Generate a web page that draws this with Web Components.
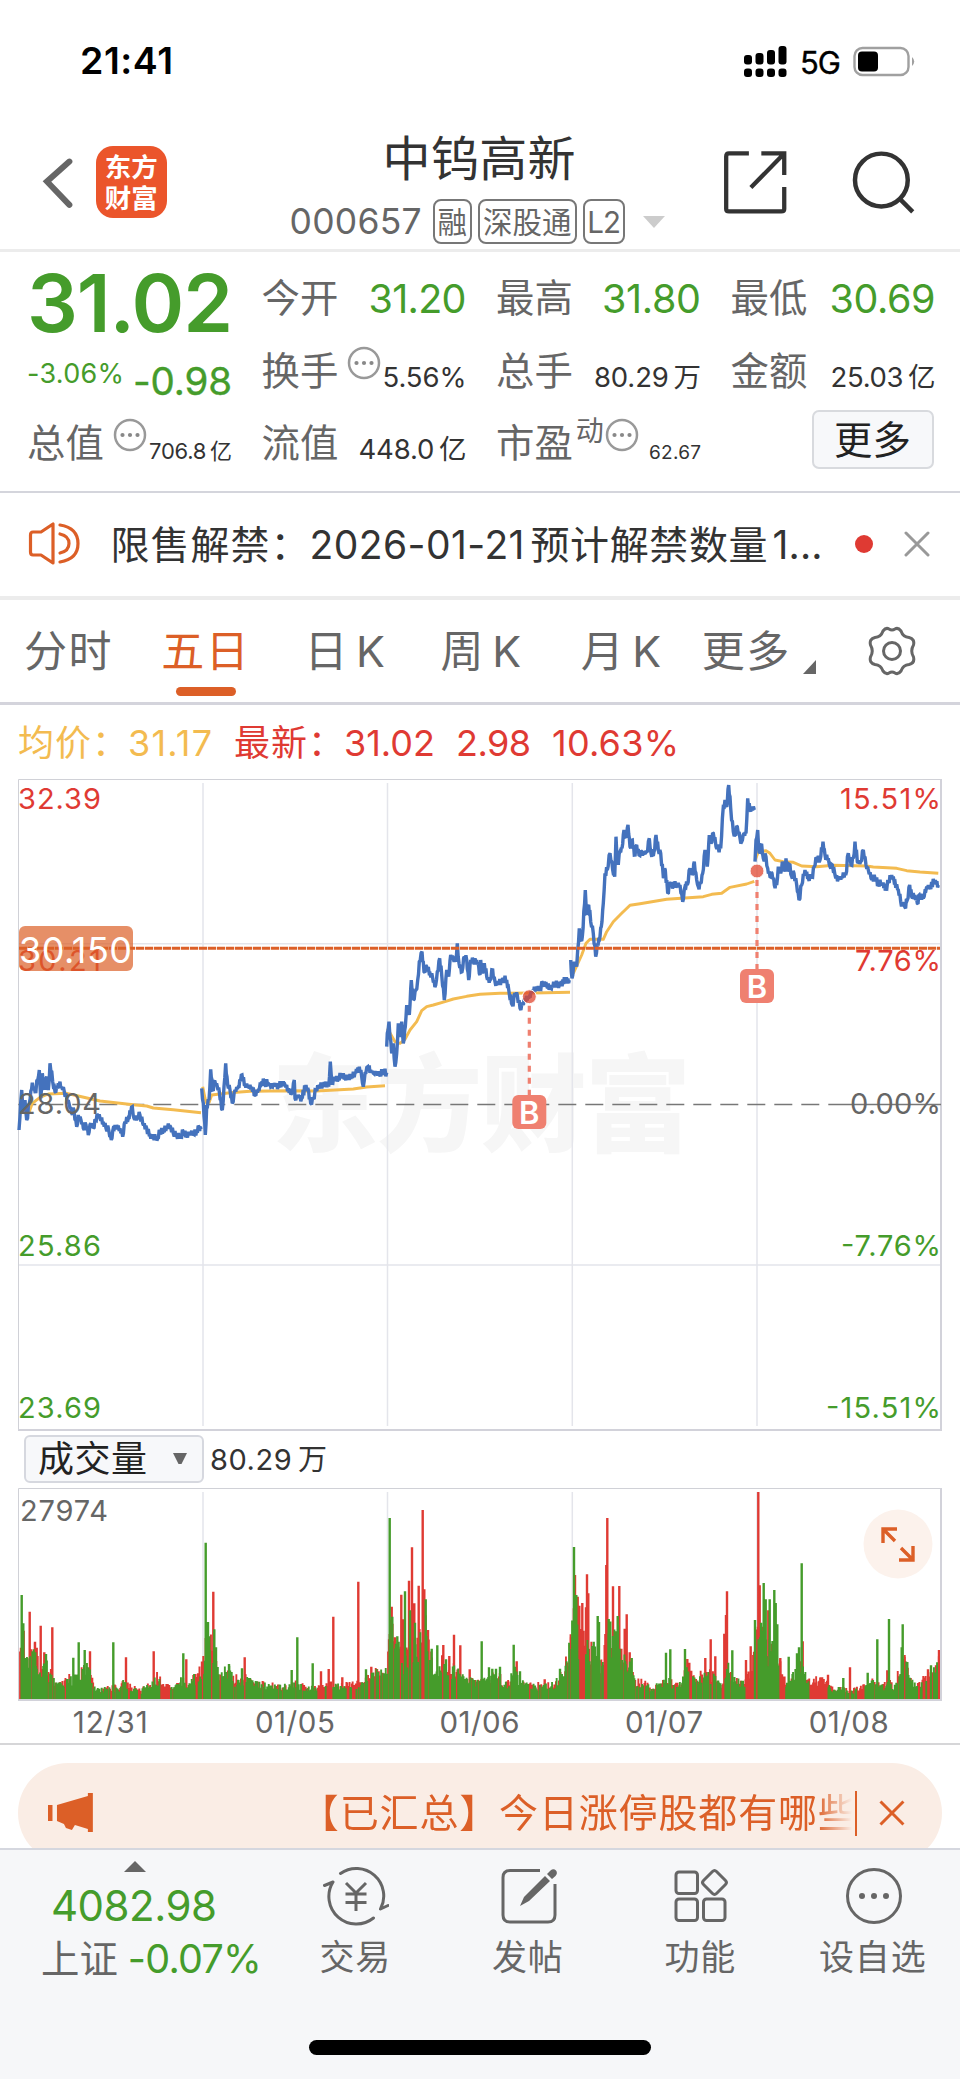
<!DOCTYPE html>
<html lang="zh-CN">
<head>
<meta charset="UTF-8">
<title>中钨高新 000657</title>
<style>
  * { margin: 0; padding: 0; box-sizing: border-box; }
  html, body { width: 960px; height: 2079px; overflow: hidden; }
  body {
    font-family: Inter, "Noto Sans CJK SC", sans-serif;
    background: #fff;
    color: #333;
    --up: #df3a33;
    --down: #459c2b;
    --brand: #dc5f27;
    --grey: #666;
    --line: #d4d5dc;
  }
</style>
</head>
<body>
<stock-page></stock-page>

<script>
// Single line of text spread to an exact width through its letter spacing
class FitText extends HTMLElement {
  constructor() {
    super();
    this.attachShadow({ mode: "open" });
  }

  connectedCallback() {
    this.shadowRoot.innerHTML = `
      <style>
        :host { display: inline-block; flex: none; line-height: 1; white-space: nowrap; }
        span { display: inline-block; }
      </style>
      <span><slot></slot></span>`;
    const width = Number(this.getAttribute("width"));
    const span = this.shadowRoot.querySelector("span");
    const gaps = Math.max(1, [...this.textContent].length - 1);
    const natural = span.getBoundingClientRect().width;
    span.style.letterSpacing = (width - natural) / gaps + "px";
    this.style.width = width + "px";
  }
}
customElements.define("fit-text", FitText);

class StatusBar extends HTMLElement {
  constructor() {
    super();
    this.attachShadow({ mode: "open" });
    this.shadowRoot.innerHTML = `
      <style>
        :host { display: flex; justify-content: space-between; height: 122px; padding: 0 44px 0 80px; color: #000; }
        .time { font-size: 37.5px; font-weight: 600; line-height: 122px; }
        .right { display: flex; align-items: center; height: 122px; }
        .net { font-size: 31px; font-weight: 400; margin: 3px 12px 0 12px; -webkit-text-stroke: .4px #000; }
      </style>
      <fit-text class="time" width="93">21:41</fit-text>
      <div class="right">
        <svg width="44" height="32" viewBox="0 0 44 32">
          <g fill="#000">
            <rect x="0" y="10" width="8" height="9.500" rx="3"/><rect x="11.500" y="8" width="8" height="11.500" rx="3"/>
            <rect x="23" y="5" width="8" height="14.500" rx="3"/><rect x="34.500" y="1" width="8" height="18.500" rx="3"/>
            <rect x="0" y="23.500" width="8" height="8.500" rx="3"/><rect x="11.500" y="23.500" width="8" height="8.500" rx="3"/>
            <rect x="23" y="23.500" width="8" height="8.500" rx="3"/><rect x="34.500" y="23.500" width="8" height="8.500" rx="3"/>
          </g>
        </svg>
        <fit-text class="net" width="41">5G</fit-text>
        <svg width="63" height="31" viewBox="0 0 63 31">
          <rect x="1.500" y="2" width="54" height="27" rx="8" fill="none" stroke="#a0a0a0" stroke-width="2.400"/>
          <rect x="5" y="5.500" width="20" height="20" rx="4" fill="#000"/>
          <path d="M59 11q4.500 4.500 0 9z" fill="#a0a0a0"/>
        </svg>
      </div>`;
  }
}
customElements.define("status-bar", StatusBar);

class StockHeader extends HTMLElement {
  constructor() {
    super();
    this.attachShadow({ mode: "open" });
    this.shadowRoot.innerHTML = `
      <style>
        * { box-sizing: border-box; }
        :host { display: flex; height: 130px; padding: 0 43px 0 42px; border-bottom: 3px solid #ececec; }
        .back { margin: 35px 22px 0 0; }
        .logo {
          width: 71px; height: 72px; margin: 24px 1px 0 0; border-radius: 17px; background: #eb552b; color: #fff;
          font-size: 26.500px; font-weight: 700; line-height: 31px; text-align: center; padding: 6px 0;
        }
        .mid { width: 376px; margin: 13px 0 0 122px; display: flex; flex-direction: column; }
        .name { font-size: 48px; margin-left: 93px; }
        .sub { display: flex; align-items: center; margin-top: 16px; color: #666; }
        .code { font-size: 35.500px; margin-right: 11px; }
        .tag { height: 45px; border: 2px solid #777; border-radius: 8px; font-size: 29.500px; line-height: 42px; padding: 0 3px; margin-right: 6px; white-space: nowrap; }
        .l2 { width: 42px; letter-spacing: -1px; text-align: center; padding: 0; }
        .share { margin: 28px 0 0 57px; }
        .search { margin: 27px 0 0 63px; }
      </style>
      <svg class="back" width="32" height="53" viewBox="0 0 32 53"><path d="M27.500 4.500L5 24.500L27.500 48" fill="none" stroke="#666" stroke-width="6" stroke-linecap="round"/></svg>
      <div class="logo">东方<br>财富</div>
      <div class="mid">
        <fit-text class="name" width="193">中钨高新</fit-text>
        <div class="sub">
          <fit-text class="code" width="132">000657</fit-text>
          <span class="tag">融</span><span class="tag">深股通</span><span class="tag l2">L2</span>
          <svg width="24" height="12" viewBox="0 0 24 12" style="margin-left:11px"><path d="M1 0H23L12 12z" fill="#ccc"/></svg>
        </div>
      </div>
      <svg class="share" width="66" height="66" viewBox="0 0 66 66" fill="none" stroke="#333" stroke-width="4.300">
        <path d="M26 3.300H6Q3.200 3.300 3.200 6.300V59Q3.200 61.500 6 61.500H58.500Q61.500 61.500 61.500 59V37M38.500 3.300H61.500V25M60.500 4.500L28 37.500"/>
      </svg>
      <svg class="search" width="66" height="66" viewBox="0 0 66 66" fill="none" stroke="#333" stroke-width="4.500">
        <circle cx="30.500" cy="31" r="26.500"/><path d="M49 50L62 63"/>
      </svg>`;
  }
}
customElements.define("stock-header", StockHeader);

// Round "..." badge next to a label
class InfoDot extends HTMLElement {
  constructor() {
    super();
    this.attachShadow({ mode: "open" });
    this.shadowRoot.innerHTML = `
      <style>:host { display: inline-block; width: 34px; padding-bottom: 5px; flex: none; } svg { display: block; }</style>
      <svg width="34" height="34" viewBox="0 0 34 34">
        <circle cx="17" cy="17" r="15" fill="none" stroke="#999" stroke-width="2.500"/>
        <g fill="#888"><circle cx="9.500" cy="17" r="2.100"/><circle cx="17" cy="17" r="2.100"/><circle cx="24.500" cy="17" r="2.100"/></g>
      </svg>`;
  }
}
customElements.define("info-dot", InfoDot);

// Label on the left (default slot), value on the right
class StatCell extends HTMLElement {
  constructor() {
    super();
    this.attachShadow({ mode: "open" });
    this.shadowRoot.innerHTML = `
      <style>
        :host { display: flex; align-items: baseline; justify-content: space-between; height: 73px; min-width: 0; }
        .label { font-size: 38.400px; line-height: 72px; color: var(--grey); white-space: nowrap; display: flex; align-items: baseline; }
        ::slotted([slot="value"]) { position: relative; top: 2px; }
        ::slotted(.g) { top: 1px; }
      </style>
      <div class="label"><slot></slot></div>
      <slot name="value"></slot>`;
  }
}
customElements.define("stat-cell", StatCell);

class QuotePanel extends HTMLElement {
  constructor() {
    super();
    this.attachShadow({ mode: "open" });
    this.shadowRoot.innerHTML = `
      <style>
        * { box-sizing: border-box; }
        :host { display: grid; grid-template-columns: repeat(4, 205px); column-gap: 29.500px; grid-auto-rows: 72.500px;
          height: 241px; padding: 10px 25px 0 27px; border-bottom: 2px solid var(--line); }
        .price { font-size: 80px; font-weight: 600; line-height: 72px; padding-top: 5px; color: var(--down); }
        .change { display: flex; justify-content: space-between; color: var(--down); }
        .pct { font-size: 27px; line-height: 72px; margin-top: 3px; }
        .diff { font-size: 38.500px; line-height: 72px; margin-top: 10px; -webkit-text-stroke: .4px var(--down); }
        .g { font-size: 39.500px; color: var(--down); }
        .v { font-size: 27.500px; color: #333; }
        .s { font-size: 22px; color: #333; }
        .xs { font-size: 19px; color: #333; }
        sup { font-size: 28px; line-height: 1; align-self: flex-start; margin: 10px 0 0 3px; }
        info-dot { margin-left: 9px; }
        .more { justify-self: end; align-self: start; width: 122px; height: 59px; margin: 3px 2px 0 0; border: 2px solid #d8dade;
          border-radius: 7px; background: #f7f8fa; font-size: 38.400px; line-height: 56px; text-align: center; color: #222; }
      </style>
      <fit-text class="price" width="206">31.02</fit-text>
      <stat-cell>今开<fit-text slot="value" class="g" width="98">31.20</fit-text></stat-cell>
      <stat-cell>最高<fit-text slot="value" class="g" width="99">31.80</fit-text></stat-cell>
      <stat-cell>最低<fit-text slot="value" class="g" width="106">30.69</fit-text></stat-cell>
      <div class="change"><fit-text class="pct" width="97">-3.06%</fit-text><fit-text class="diff" width="99">-0.98</fit-text></div>
      <stat-cell>换手<info-dot></info-dot><fit-text slot="value" class="v" width="84">5.56%</fit-text></stat-cell>
      <stat-cell>总手<fit-text slot="value" class="v" width="107">80.29&#8201;万</fit-text></stat-cell>
      <stat-cell>金额<fit-text slot="value" class="v" width="105">25.03&#8201;亿</fit-text></stat-cell>
      <stat-cell>总值<info-dot></info-dot><fit-text slot="value" class="s" width="83">706.8&#8201;亿</fit-text></stat-cell>
      <stat-cell>流值<fit-text slot="value" class="v" width="108">448.0&#8201;亿</fit-text></stat-cell>
      <stat-cell>市盈<sup>动</sup><info-dot style="margin-left:1px"></info-dot><fit-text slot="value" class="xs" width="52">62.67</fit-text></stat-cell>
      <div class="more">更多</div>`;
  }
}
customElements.define("quote-panel", QuotePanel);

class NewsStrip extends HTMLElement {
  constructor() {
    super();
    this.attachShadow({ mode: "open" });
    this.shadowRoot.innerHTML = `
      <style>
        :host { display: flex; align-items: center; height: 107px; padding: 0 30px 1px 28px; border-bottom: 4px solid #ececec; }
        .text { font-size: 39px; margin: 0 0 0 29.500px; display: flex; }
        .dot { width: 18px; height: 18px; border-radius: 50%; background: var(--up); margin: 0 31px 0 auto; }
      </style>
      <svg width="53" height="46" viewBox="0 0 53 46" fill="none" stroke="#dc5f27" stroke-width="3.200" stroke-linecap="round" stroke-linejoin="round">
        <path d="M25 3V42L13 34H5Q2.500 34 2.500 31V14Q2.500 11 5 11H13zM32 4Q50 7 50 22.500Q50 38 32 41M32 13Q41 15 41 22.500Q41 30 32 32"/>
      </svg>
      <div class="text"><fit-text width="199">限售解禁：</fit-text><fit-text width="215">2026-01-21</fit-text><fit-text width="237" style="margin-left:6px">预计解禁数量</fit-text><fit-text width="50" style="margin-left:5px">1...</fit-text></div>
      <span class="dot"></span>
      <svg width="26" height="26" viewBox="0 0 26 26" stroke="#999" stroke-width="3" stroke-linecap="round"><path d="M2 2L24 24M24 2L2 24"/></svg>`;
  }
}
customElements.define("news-strip", NewsStrip);

class PeriodTab extends HTMLElement {
  constructor() {
    super();
    this.attachShadow({ mode: "open" });
    this.shadowRoot.innerHTML = `
      <style>
        :host { display: flex; flex-direction: column; align-items: center; color: var(--grey); font-size: 43px; white-space: nowrap; }
        :host([active]) { color: var(--brand); }
        span { display: flex; gap: 7px; letter-spacing: 1.600px; height: 86px; line-height: 100px; }
        i { display: none; width: 60px; height: 9px; border-radius: 4.500px; background: var(--brand); }
        :host([active]) i { display: block; }
      </style>
      <span><slot></slot></span><i></i>`;
  }
}
customElements.define("period-tab", PeriodTab);

class PeriodTabs extends HTMLElement {
  constructor() {
    super();
    this.attachShadow({ mode: "open" });
    this.shadowRoot.innerHTML = `
      <style>
        :host { display: flex; height: 105px; padding: 1px 42px 0 24px; border-bottom: 3px solid #d4d4dc; }
        .corner { margin: 59px 0 0 12px; }
        .gear { margin: 24px 0 0 auto; }
      </style>
      <period-tab>分时</period-tab>
      <period-tab active style="margin-left:48px">五日</period-tab>
      <period-tab style="margin-left:54px">日<b style="font-weight:400">K</b></period-tab>
      <period-tab style="margin-left:54px">周<b style="font-weight:400">K</b></period-tab>
      <period-tab style="margin-left:58px">月<b style="font-weight:400">K</b></period-tab>
      <period-tab style="margin-left:39px">更多</period-tab>
      <svg class="corner" width="13" height="14" viewBox="0 0 13 14"><path d="M13 0V14H0z" fill="#666"/></svg>
      <svg class="gear" width="52" height="52" viewBox="0 0 52 52" fill="none" stroke="#666" stroke-width="3" stroke-linejoin="round">
        <path d="M17 6Q20 2 23 4Q26 6 29 4Q32 2 35 6Q37 12 43 12.500Q49 14 47.500 20Q44 26 47.500 32Q49 38 43 39.500Q37 40 35 46Q32 50 29 48Q26 46 23 48Q20 50 17 46Q15 40 9 39.500Q3 38 4.500 32Q8 26 4.500 20Q3 14 9 12.500Q15 12 17 6z"/>
        <circle cx="26" cy="26" r="8.500"/>
      </svg>`;
  }
}
customElements.define("period-tabs", PeriodTabs);

class ChartLegend extends HTMLElement {
  constructor() {
    super();
    this.attachShadow({ mode: "open" });
    this.shadowRoot.innerHTML = `
      <style>
        :host { display: flex; height: 74px; padding: 20px 0 0 18px; font-size: 36px; color: var(--up); }
        .avg { color: #f3bb50; }
      </style>
      <fit-text class="avg" width="110">均价：</fit-text><fit-text class="avg" width="84">31.17</fit-text>
      <fit-text width="110" style="margin-left:22px">最新：</fit-text><fit-text width="91">31.02</fit-text>
      <fit-text width="75" style="margin-left:21px">2.98</fit-text><fit-text width="127" style="margin-left:21px">10.63%</fit-text>`;
  }
}
customElements.define("chart-legend", ChartLegend);

// Small seeded generator: the charts look the same on every load
function seeded(seed) {
  return () => (seed = (seed * 16807) % 2147483647) / 2147483647;
}

// Traces are in thirds of a pixel, x from the page's left edge, y from 770
const PRICE = [
  "57,1080 65,960 70,1020 75,990 80,1050 88,1000 97,938 105,965 113,930 118,900 122,985 127,910 133,955 140,920 145,960 150,880 158,935 165,965 175,940 185,950 193,965 200,985 207,1000 215,1030 222,1020 230,1070 235,1035 243,1050 250,1075 258,1065 265,1095 272,1060 280,1075 287,1050 293,1035 300,1045 310,1055 318,1075 326,1080 334,1110 340,1075 350,1065 360,1075 368,1100 375,1055 385,1045 397,1010 402,1045 412,1040 420,1035 428,1060 440,1075 450,1095 460,1100 473,1105 480,1085 490,1080 500,1068 512,1072 520,1090 530,1095 542,1102 550,1085 560,1095 570,1088 580,1092 590,1082 597,1070 603,1078",
  "605,955 610,1000 616,1095 620,1010 627,990 632,898 638,960 645,935 652,950 658,965 667,1020 672,950 677,880 683,945 690,960 697,1000 705,960 715,950 726,915 735,945 745,945 755,950 765,975 775,960 785,935 795,940 805,938 815,950 825,940 835,948 845,940 855,945 865,955 875,970 883,930 885,985 895,975 905,985 918,945 926,965 932,1000 940,985 948,960 958,945 968,945 978,935 986,950 991,875 996,940 1005,920 1015,925 1025,910 1035,925 1045,918 1055,918 1065,908 1078,890 1085,920 1090,950 1095,910 1103,890 1112,900 1120,910 1130,905 1140,912 1150,905 1160,908",
  "1160,830 1162,790 1167,755 1175,850 1180,820 1185,890 1190,850 1195,760 1200,800 1205,755 1210,820 1216,770 1220,705 1228,735 1234,630 1240,690 1248,660 1253,630 1258,575 1266,545 1272,605 1280,590 1290,610 1298,625 1307,645 1312,605 1319,565 1325,615 1333,690 1340,600 1346,620 1352,555 1360,565 1367,575 1372,520 1377,580 1386,605 1393,560 1400,570 1406,630 1412,570 1420,575 1430,570 1436,590 1440,615 1442,570 1448,610 1453,580 1460,620 1470,630 1478,600 1485,635 1495,640 1510,628 1520,630 1527,665 1537,705 1545,670 1552,675 1560,715 1568,700 1575,690 1588,680 1598,660 1610,655 1620,655 1628,638 1640,648 1652,655 1665,640 1680,645 1695,632 1708,630",
  "1712,570 1716,625 1723,575 1730,590 1733,540 1738,475 1743,510 1747,500 1756,360 1760,430 1766,405 1772,455 1780,490 1787,560 1792,520 1798,510 1804,470 1810,400 1815,310 1822,300 1830,250 1838,300 1844,320 1848,200 1853,280 1860,245 1866,235 1872,180 1878,200 1884,165 1890,230 1897,210 1903,255 1910,225 1917,255 1925,245 1933,250 1940,245 1948,205 1953,250 1962,245 1968,195 1975,240 1982,250 1990,320 1996,300 2003,370 2010,340 2020,345 2030,345 2040,345 2048,395 2055,350 2062,345 2070,295 2077,315 2083,275 2090,330 2095,350 2102,340 2108,310 2115,240 2122,290 2128,195 2133,220 2140,190 2148,230 2155,235 2162,235 2170,110 2175,90 2180,110 2186,45 2192,115 2200,185 2205,195 2212,170 2220,205 2225,215 2232,190 2238,190 2243,85 2250,120 2255,110 2263,120",
  "2265,275 2268,210 2273,180 2278,250 2285,225 2290,265 2298,260 2303,295 2310,320 2316,310 2323,345 2330,345 2335,290 2342,310 2347,275 2355,305 2358,265 2363,300 2370,285 2375,320 2382,310 2390,345 2397,390 2405,345 2415,300 2425,325 2435,320 2443,290 2450,265 2460,270 2469,215 2475,255 2485,265 2490,290 2497,285 2505,315 2515,325 2525,320 2537,315 2545,250 2553,285 2560,265 2565,215 2572,275 2582,275 2590,240 2598,285 2605,300 2613,325 2625,325 2635,340 2645,340 2658,355 2665,335 2675,315 2685,335 2695,360 2702,395 2714,410 2722,390 2729,345 2735,380 2745,375 2752,400 2758,375 2770,385 2780,350 2790,350 2802,335 2815,345"
];
const AVERAGE = [
  "88,1025 97,1000 120,982 145,972 200,970 235,978 300,993 400,1004 440,1008 460,1014 520,1019 603,1028",
  "608,950 615,985 620,1000 627,998 635,975 690,968 750,964 860,962 950,963 1060,957 1100,951 1155,947",
  "1162,775 1185,815 1200,820 1215,808 1230,780 1250,755 1265,722 1280,710 1300,705 1335,695 1360,687 1400,679 1440,673 1500,670 1600,669 1710,667",
  "1720,610 1745,555 1758,520 1770,508 1790,508 1810,508 1820,485 1840,455 1865,430 1890,406 1920,401 2000,388 2110,380 2135,373 2165,370 2190,352 2240,342 2263,334",
  "2266,270 2275,245 2298,242 2310,250 2325,270 2350,275 2380,277 2405,288 2450,290 2500,286 2600,288 2620,291 2690,295 2720,302 2760,306 2815,310"
];

const parse = (trace) => trace.split(" ").map((p) => p.split(",").map(Number));
// page thirds -> chart pixels (chart starts at x 0, y 779)
const toPath = (points) => "M" + points.map(([x, y]) => (x / 3).toFixed(1) + " " + (y / 3 - 9).toFixed(1)).join("L");

// Adds the minute by minute wobble between two traced points
function wobble(points, random) {
  const out = [points[0]];
  for (let i = 1; i < points.length; i++) {
    const [x0, y0] = points[i - 1];
    const [x1, y1] = points[i];
    const steps = Math.max(1, Math.round((x1 - x0) / 2.3));
    for (let s = 1; s < steps; s++) {
      const t = s / steps;
      out.push([x0 + (x1 - x0) * t, y0 + (y1 - y0) * t + (s % 2 ? 1 : -1) * (3 + random() * 9)]);
    }
    out.push([x1, y1]);
  }
  return out;
}

class PriceChart extends HTMLElement {
  constructor() {
    super();
    this.attachShadow({ mode: "open" });
  }

  connectedCallback() {
    const random = seeded(657);
    const left = [["32.39", 30, "up"], ["30.21", 192, "up"], ["28.04", 334.5, "mid"], ["25.86", 477, "down"], ["23.69", 639, "down"]];
    const right = [["15.51%", 30, "up", 101], ["7.76%", 192, "up", 86], ["0.00%", 334.5, "mid", 91], ["-7.76%", 477, "down", 100], ["-15.51%", 639, "down", 115]];
    const marker = (x, dotY, boxY) => `
      <path d="M${x} ${dotY + 9}V${boxY}" stroke="#ef8070" stroke-width="3.200" stroke-dasharray="6 6"/>
      <circle cx="${x}" cy="${dotY}" r="7" fill="#e0452f" fill-opacity=".75" stroke="#fff" stroke-width="1"/>
      <rect x="${x - 17}" y="${boxY}" width="34" height="34" rx="6" fill="#ef8070"/>
      <text x="${x}" y="${boxY + 29}" text-anchor="middle" font-size="31" font-weight="600" fill="#fff">B</text>`;
    this.shadowRoot.innerHTML = `
      <style>
        :host { display: block; height: 653px; }
        svg { display: block; }
        .axis { font-size: 29px; }
        .up { fill: var(--up); } .mid { fill: #666; } .down { fill: var(--down); }
        .mark { font-size: 106px; font-weight: 900; fill: #f6f6f6; }
      </style>
      <svg width="960" height="653" viewBox="0 0 960 653">
        <text class="mark" x="272" y="364" textLength="419">东方财富</text>
        <g stroke="#e4e5eb" stroke-width="1.500">
          <path d="M203 4V647M387.500 4V647M572.300 4V647M757 4V647M19 164.700H941M19 486H941"/>
        </g>
        <path d="M18.500 651V.5H941" fill="none" stroke="#d0d1d7"/>
        <path d="M18 651H941V0" fill="none" stroke="#d2d2da" stroke-width="2"/>
        <path d="M18.300 325.500H846" stroke="#777" stroke-width="1.500" stroke-dasharray="18 9"/>
        <path d="M846 325.500H941" stroke="#777" stroke-width="1.500"/>
        ${AVERAGE.map((t) => `<path d="${toPath(parse(t))}" fill="none" stroke="#f3bb50" stroke-width="2.900" stroke-linejoin="round"/>`).join("")}
        ${PRICE.map((t) => `<path d="${toPath(wobble(parse(t), random))}" fill="none" stroke="#4472bd" stroke-width="3.400" stroke-linejoin="miter" stroke-miterlimit="2"/>`).join("")}
        ${left.map(([s, y, c]) => `<text class="axis ${c}" x="18" y="${y}" textLength="83">${s}</text>`).join("")}
        ${right.map(([s, y, c, w]) => `<text class="axis ${c}" x="${941 - w}" y="${y}" textLength="${w}">${s}</text>`).join("")}
        <path d="M19 169.300H940" stroke="#dc5f27" stroke-width="3" stroke-dasharray="8.200 .8"/>
        <rect x="19" y="147" width="114" height="45" rx="6" fill="#dc5f27" fill-opacity=".7"/>
        <text x="19" y="183.500" font-size="36" textLength="113" fill="#fff">30.150</text>
        ${marker(529.3, 217.7, 316)}
        ${marker(757, 92, 190)}
      </svg>`;
  }
}
customElements.define("price-chart", PriceChart);

class VolumeBar extends HTMLElement {
  constructor() {
    super();
    this.attachShadow({ mode: "open" });
    this.shadowRoot.innerHTML = `
      <style>
        * { box-sizing: border-box; }
        :host { display: flex; height: 56px; padding: 3px 0 0 24px; }
        .select { display: flex; align-items: center; justify-content: space-between; width: 180px; height: 48px; padding: 0 15px 0 12px;
          border: 2px solid #d6d8df; border-radius: 6px; background: #f7f8fa; font-size: 36px; color: #222; }
        .value { font-size: 29px; line-height: 49px; margin-left: 6px; }
      </style>
      <div class="select"><fit-text width="109">成交量</fit-text><svg width="14" height="12" viewBox="0 0 14 12"><path d="M0 0H14L8.500 11H5.500z" fill="#666"/></svg></div>
      <fit-text class="value" width="117">80.29&#8201;万</fit-text>`;
  }
}
customElements.define("volume-bar", VolumeBar);

// "x:height" base level, in the same thirds of a pixel
const VOLUME_BASE = "57:60 62:180 70:110 85:115 100:140 115:105 135:110 150:75 160:55 175:55 190:45 200:70 215:55 235:75 250:90 270:90 282:35 300:28 330:32 360:38 375:55 400:33 425:25 460:60 475:65 490:38 520:30 545:60 560:40 580:60 600:85 612:120 620:180 640:140 655:75 670:85 688:90 700:55 735:70 760:45 800:45 850:38 880:48 920:33 960:36 1000:42 1060:42 1080:55 1100:65 1130:75 1150:80 1163:110 1166:200 1185:165 1200:150 1215:110 1230:160 1250:180 1265:190 1280:200 1290:120 1310:80 1325:110 1345:75 1360:100 1385:70 1410:58 1440:50 1500:70 1510:40 1530:55 1540:95 1555:65 1570:45 1590:38 1660:43 1690:75 1712:165 1720:250 1740:180 1760:150 1790:130 1805:90 1815:170 1835:200 1855:190 1865:105 1885:125 1905:48 1930:48 1960:33 1985:50 2000:58 2030:38 2050:60 2065:90 2080:55 2100:65 2120:75 2140:65 2170:38 2185:105 2205:55 2225:50 2250:80 2265:140 2270:180 2285:200 2300:165 2320:150 2335:115 2350:65 2365:45 2380:70 2395:110 2408:90 2425:48 2450:55 2480:55 2500:28 2530:32 2550:25 2580:33 2605:45 2625:55 2650:40 2665:70 2680:25 2695:75 2715:110 2730:55 2750:40 2775:58 2795:80 2818:105";
// "x:top" single tall bars, g = falling, r = rising minute
const VOLUME_PEAKS = "65:525g 70:610g 71:632r 89:575r 105:665r 110:683r 122:617r 133:697r 138:702g 157:622r 220:713g 236:667g 254:690g 270:694r 340:667g 378:712r 461:694r 550:700g 559:718r 617:368g 624:606g 629:690g 640:515r 643:628g 648:682g 687:732g 726:745g 734:712r 875:750g 892:652g 938:730g 963:754r 986:747r 1000:590r 1027:772r 1075:485r 1098:748g 1114:740r 1169:294g 1175:560r 1177:590g 1185:652r 1192:649g 1204:524r 1210:598r 1215:514g 1227:482r 1230:571g 1236:382r 1243:550r 1245:608g 1256:497r 1268:270r 1273:508r 1277:538g 1284:630r 1295:686g 1312:676g 1330:675r 1338:718g 1348:708r 1362:644r 1381:676r 1409:748r 1445:664g 1467:742g 1477:746g 1488:746g 1500:740g 1541:674g 1550:724r 1560:754g 1634:778r 1680:746g 1697:737g 1712:652r 1722:381g 1725:465r 1729:525g 1733:530r 1738:557r 1747:549r 1758:562r 1761:463r 1765:520r 1781:665g 1793:588g 1797:606g 1819:435r 1822:294r 1826:597g 1839:499r 1848:634g 1853:588g 1858:498r 1864:686r 1874:626r 1880:583r 1889:697r 1895:714g 1998:698g 2011:688g 2055:687g 2062:717r 2068:728r 2116:714r 2132:658r 2146:709r 2173:641r 2178:585r 2181:514r 2197:691g 2238:720r 2252:679r 2265:600g 2275:216r 2279:496r 2283:608g 2291:489g 2297:538g 2305:571r 2309:538g 2315:671r 2323:510g 2327:549g 2332:613g 2341:714r 2366:710g 2391:700g 2397:682g 2405:430g 2408:664r 2484:764r 2530:774g 2550:742r 2603:758g 2632:658g 2662:751r 2667:597g 2705:682g 2708:613g 2714:710r 2722:726g 2784:748r 2793:736g 2808:736r 2817:690r";
// stretches where rising minutes prevail
const RISING = [[480, 512], [585, 612], [950, 1000], [1040, 1065], [1200, 1212], [1222, 1240], [1248, 1272], [1340, 1358], [1700, 1717], [1735, 1765], [1808, 1824], [2066, 2082], [2102, 2116], [2165, 2180], [2238, 2262], [2340, 2356], [2415, 2485], [2560, 2596], [2780, 2800]];

class VolumeChart extends HTMLElement {
  constructor() {
    super();
    this.attachShadow({ mode: "open" });
  }

  bars() {
    const random = seeded(27974);
    const base = VOLUME_BASE.split(" ").map((p) => p.split(":").map(Number));
    const red = [];
    const green = [];
    const add = (list, x, h, w) => list.push(`M${(x / 3 - w / 2).toFixed(1)} 211v-${(h / 3).toFixed(1)}h${w}v${(h / 3).toFixed(1)}z`);
    let i = 0;
    for (let x = 60; x < 2819; x += 2.31) {
      while (i < base.length - 2 && base[i + 1][0] < x) i++;
      const [x0, h0] = base[i];
      const [x1, h1] = base[i + 1];
      const level = h0 + (h1 - h0) * (x - x0) / (x1 - x0);
      const rising = RISING.some(([a, b]) => x >= a && x <= b);
      const isRed = random() < (rising ? 0.85 : 0.4);
      add(isRed ? red : green, x, level * (isRed ? 0.7 + random() * 0.6 : 0.6 + random() * 0.6), 1.9);
    }
    VOLUME_PEAKS.split(" ").forEach((p) => {
      const [x, top] = p.split(":");
      add(top.endsWith("r") ? red : green, Number(x), 837 - parseInt(top), 2.4);
    });
    return `<path d="${red.join("")}" fill="#df3a33"/><path d="${green.join("")}" fill="#459c2b"/>`;
  }

  connectedCallback() {
    this.shadowRoot.innerHTML = `
      <style>
        :host { display: block; height: 257px; border-bottom: 2px solid #d6d6d8; }
        .plot { position: relative; height: 214px; }
        svg { display: block; }
        .expand { position: absolute; left: 863px; top: 21px; }
        .dates { display: flex; margin: 2px 19px 0 18px; font-size: 29.500px; color: #666; }
        .dates span { flex: 1; text-align: center; line-height: 36px; }
        .dates fit-text { line-height: 36px; }
      </style>
      <div class="plot">
        <svg width="960" height="214" viewBox="0 0 960 214">
          <path d="M203 4V211M387.500 4V211M572.300 4V211M757 4V211" stroke="#e4e5eb" stroke-width="1.500"/>
          <path d="M18.500 212V.5H941" fill="none" stroke="#d0d1d7"/>
          ${this.bars()}
          <path d="M18 212H941V0" fill="none" stroke="#d2d2da" stroke-width="2"/>
          <text x="20" y="33" font-size="29" textLength="88" fill="#666">27974</text>
        </svg>
        <svg class="expand" width="70" height="70" viewBox="0 0 70 70">
          <circle cx="35" cy="35" r="34.500" fill="#fcf2ec"/>
          <path d="M34 20H20V34M20.500 20.500L32 32M50 37V51H36M49.500 50.500L38 39" fill="none" stroke="#dc5f27" stroke-width="3.400"/>
        </svg>
      </div>
      <div class="dates">
        <span><fit-text width="75">12/31</fit-text></span><span><fit-text width="80">01/05</fit-text></span><span><fit-text width="80">01/06</fit-text></span><span><fit-text width="78">01/07</fit-text></span><span><fit-text width="80">01/08</fit-text></span>
      </div>`;
  }
}
customElements.define("volume-chart", VolumeChart);

class PromoBanner extends HTMLElement {
  constructor() {
    super();
    this.attachShadow({ mode: "open" });
    this.shadowRoot.innerHTML = `
      <style>
        * { box-sizing: border-box; }
        :host { display: block; height: 103px; padding: 18px 18px 0; overflow: hidden; color: var(--brand); }
        .pill { display: flex; align-items: center; height: 100px; border-radius: 50px; background: #faede5; padding: 0 37px 0 30px; }
        .text { margin-left: 206px; width: 554px; overflow: hidden; font-size: 39px; line-height: 60px;
          -webkit-mask-image: linear-gradient(90deg, #000 calc(100% - 36px), transparent); mask-image: linear-gradient(90deg, #000 calc(100% - 36px), transparent); }
        .text fit-text { line-height: 60px; display: block; }
        .bar { width: 2px; height: 45px; background: var(--brand); margin: 0 22px 0 3px; }
      </style>
      <div class="pill">
        <svg width="46" height="40" viewBox="0 0 46 40" fill="#dc5f27">
          <path d="M0 12H4.500V28H0zM9 12L40 3V0H45V39H40V36L27 32L24 37L18 35L16 31L9 28z"/>
        </svg>
        <div class="text"><fit-text width="557">【已汇总】今日涨停股都有哪些</fit-text></div>
        <span class="bar"></span>
        <svg width="26" height="26" viewBox="0 0 26 26" stroke="#dc5f27" stroke-width="3"><path d="M1.500 1.500L24.500 24.500M24.500 1.500L1.500 24.500"/></svg>
      </div>`;
  }
}
customElements.define("promo-banner", PromoBanner);

// Icon over label; the icon comes in through its slot
class ActionItem extends HTMLElement {
  constructor() {
    super();
    this.attachShadow({ mode: "open" });
    this.shadowRoot.innerHTML = `
      <style>
        :host { display: flex; flex-direction: column; align-items: center; width: 172.500px; color: #666; font-size: 35px; padding-top: 14px; }
        .label { line-height: 40px; margin: 9px 2px 0 0; letter-spacing: .8px; white-space: nowrap; }
      </style>
      <slot name="icon"></slot>
      <div class="label"><slot></slot></div>`;
  }
}
customElements.define("action-item", ActionItem);

class BottomBar extends HTMLElement {
  constructor() {
    super();
    this.attachShadow({ mode: "open" });
    this.shadowRoot.innerHTML = `
      <style>
        :host { display: flex; flex-direction: column; height: 232px; background: #f6f7f9; border-top: 2px solid #d5d7df; }
        .row { display: flex; height: 190px; }
        .index { width: 270px; color: var(--down); }
        .arrow { display: block; margin: 11px 0 0 124px; }
        .points { display: block; font-size: 42px; margin: 13px 0 0 51px; }
        .sub { display: flex; align-items: baseline; margin: 13px 0 0 41px; font-size: 38.400px; line-height: 1; }
        .sub span { color: #666; }
        svg { fill: none; stroke: #666; stroke-width: 3; }
        .home { width: 342px; height: 15px; border-radius: 8px; background: #000; margin: 0 auto; }
      </style>
      <div class="row">
        <div class="index">
          <svg class="arrow" width="22" height="11" viewBox="0 0 22 11"><path d="M11 0L22 11H0z" fill="#666" stroke="none"/></svg>
          <fit-text class="points" width="166">4082.98</fit-text>
          <div class="sub"><span>上证</span><fit-text width="134" style="font-size:39.500px;margin-left:10px">-0.07%</fit-text></div>
        </div>
        <action-item>
          <svg slot="icon" width="66" height="64" viewBox="0 0 66 64">
            <path d="M17.500 9.500A27.500 27.500 0 0 1 57.500 45L65 41.500M50.500 54A27.500 27.500 0 0 1 10 18L1.500 21.500" stroke-linecap="round" stroke-linejoin="round"/>
            <path d="M23 19L33 29L43 19M33 29V47M22.500 30H43.500M22.500 38.500H43.500"/>
          </svg>交易
        </action-item>
        <action-item>
          <svg slot="icon" width="66" height="64" viewBox="0 0 66 64">
            <path d="M44 6.500H14Q7 6.500 7 13.500V51Q7 58 14 58H52Q59 58 59 51V20"/>
            <path d="M51 10L54.500 6.500Q57.500 4 60 6.500Q62 9 59.500 12L56 15zM49 12L54 17L33 37L24 42L28 33z" fill="#666" stroke="none"/>
          </svg>发帖
        </action-item>
        <action-item>
          <svg slot="icon" width="66" height="64" viewBox="0 0 66 64">
            <rect x="8" y="8" width="21.500" height="21.500" rx="3"/><rect x="8" y="35" width="21.500" height="21.500" rx="3"/><rect x="35.500" y="35" width="21.500" height="21.500" rx="3"/>
            <path d="M44.500 7.500Q46.500 5.500 48.500 7.500L57.500 16.500Q59.500 18.500 57.500 20.500L48.500 29.500Q46.500 31.500 44.500 29.500L35.500 20.500Q33.500 18.500 35.500 16.500z"/>
          </svg>功能
        </action-item>
        <action-item>
          <svg slot="icon" width="66" height="64" viewBox="0 0 66 64">
            <circle cx="33" cy="32" r="26.500"/>
            <g fill="#666" stroke="none"><circle cx="21" cy="32" r="3"/><circle cx="33" cy="32" r="3"/><circle cx="45" cy="32" r="3"/></g>
          </svg>设自选
        </action-item>
      </div>
      <div class="home"></div>`;
  }
}
customElements.define("bottom-bar", BottomBar);

class StockPage extends HTMLElement {
  constructor() {
    super();
    this.attachShadow({ mode: "open" });
    this.shadowRoot.innerHTML = `
      <style>
        :host { display: flex; flex-direction: column; width: 960px; height: 2079px; }
        status-bar, stock-header, quote-panel, news-strip, period-tabs, chart-legend, price-chart, volume-bar, volume-chart, promo-banner, bottom-bar { box-sizing: border-box; flex: none; }
      </style>
      <status-bar></status-bar>
      <stock-header></stock-header>
      <quote-panel></quote-panel>
      <news-strip></news-strip>
      <period-tabs></period-tabs>
      <chart-legend></chart-legend>
      <price-chart></price-chart>
      <volume-bar></volume-bar>
      <volume-chart></volume-chart>
      <promo-banner></promo-banner>
      <bottom-bar></bottom-bar>`;
  }
}
customElements.define("stock-page", StockPage);
</script>
</body>
</html>
